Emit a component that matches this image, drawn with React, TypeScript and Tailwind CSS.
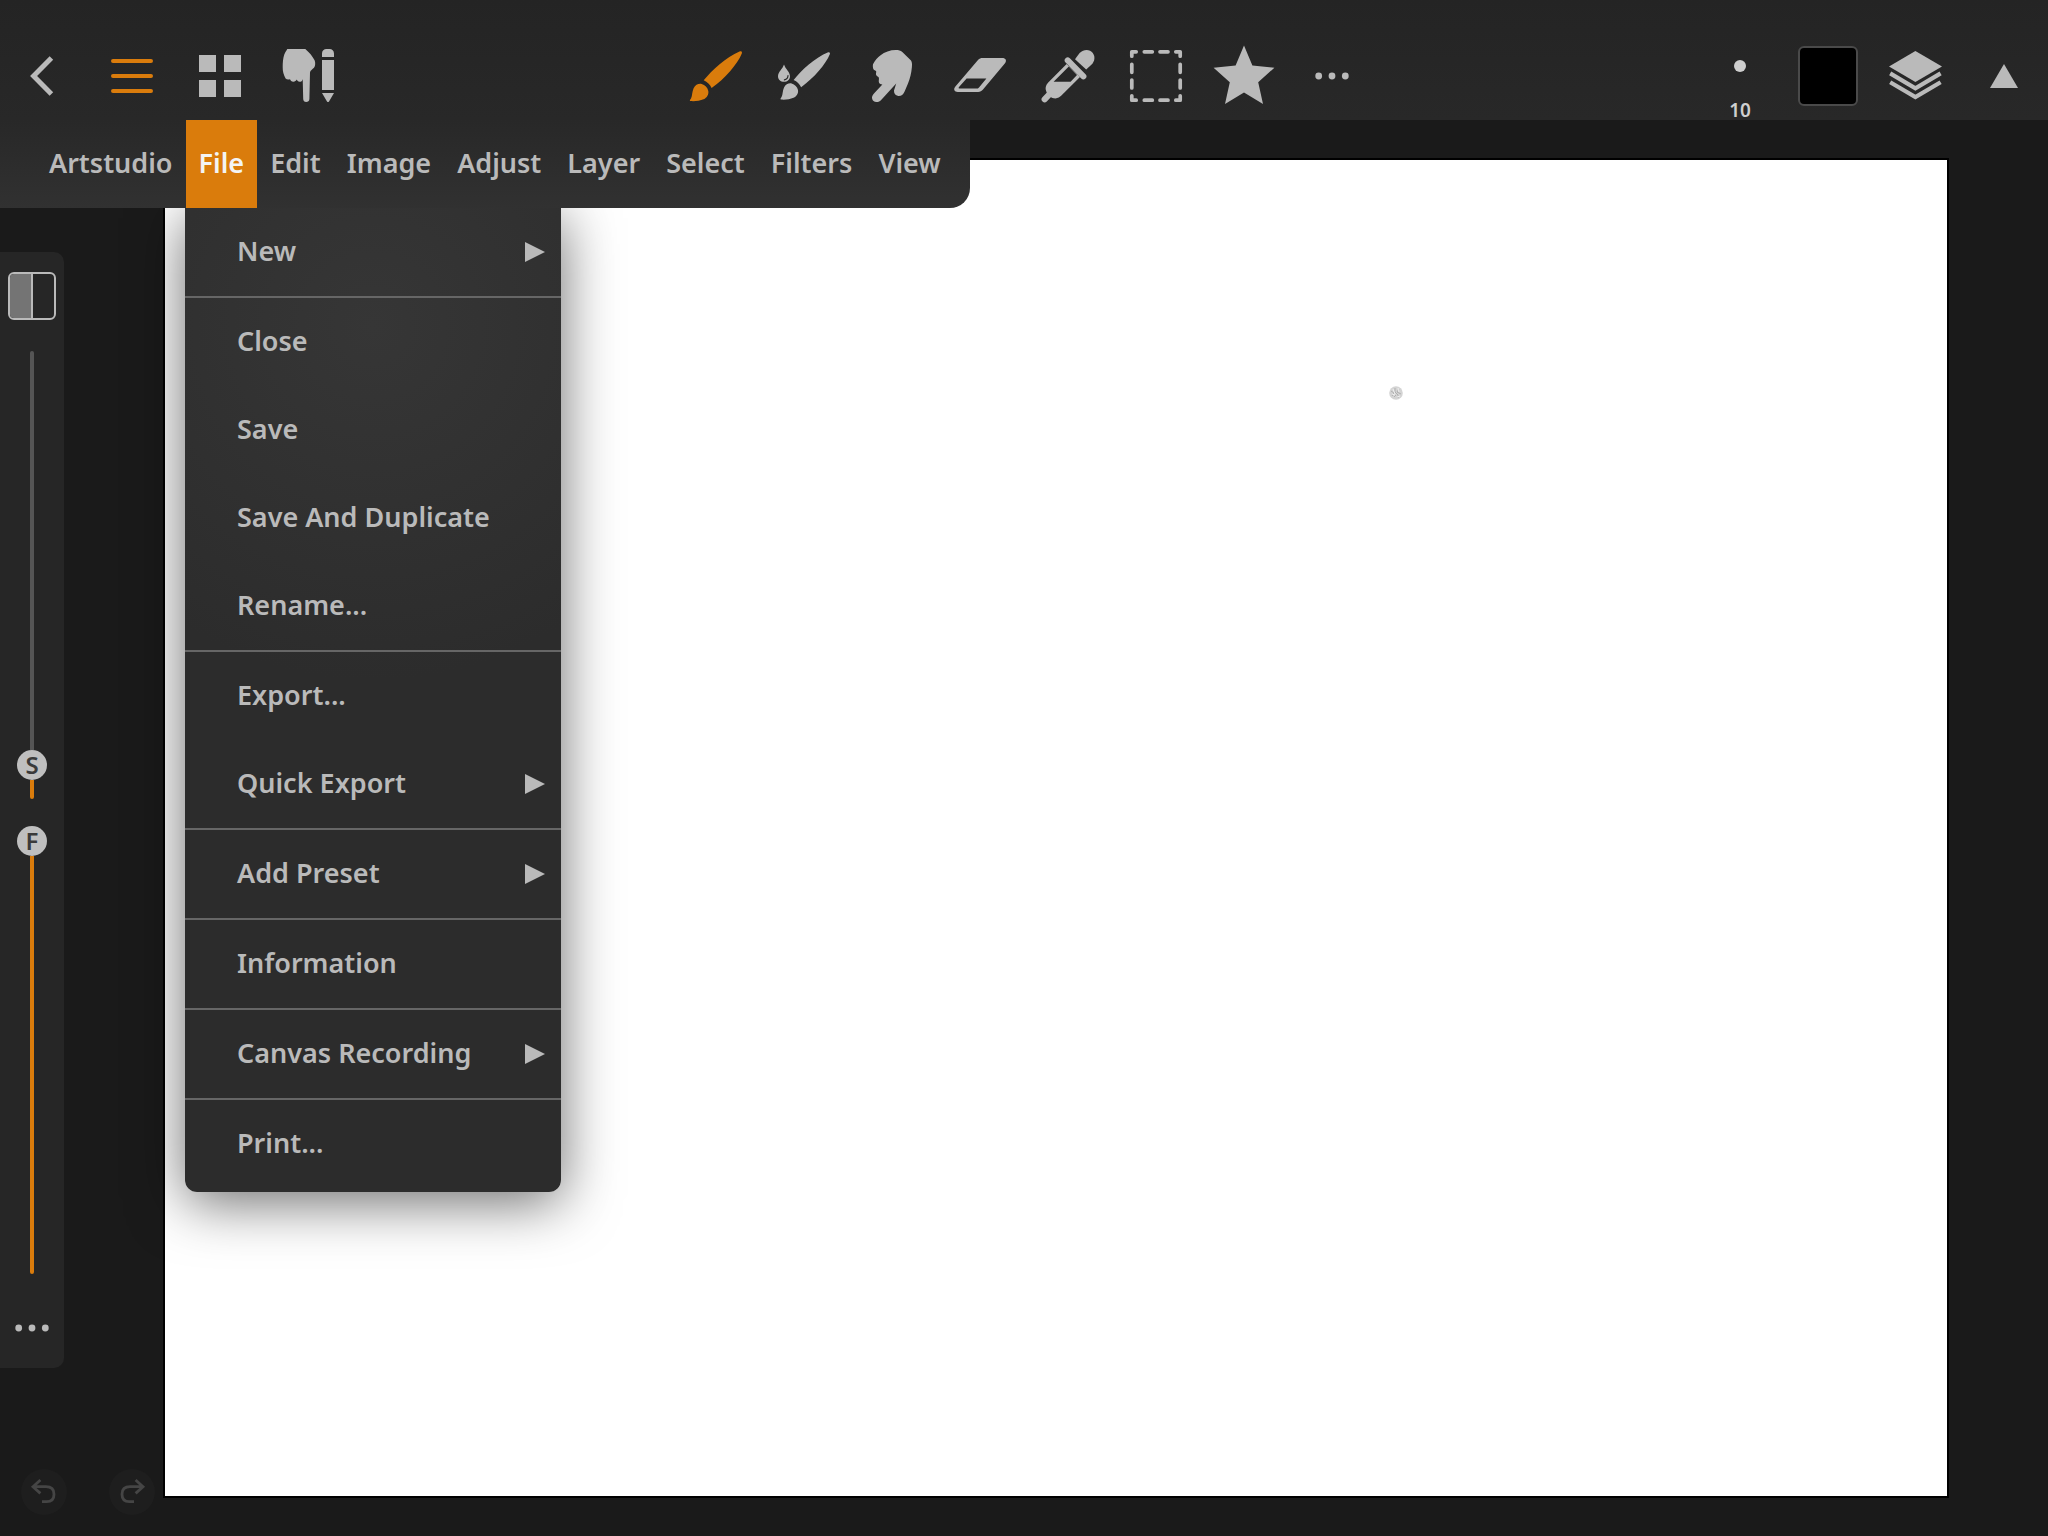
import { useState } from "react";
import type { ReactNode } from "react";

const brush =
  "M19.7 36.3C28 26 42 13 55.5 7.4C57.5 6.7 58.4 7.6 57.8 9.4C53.5 20 41 34.5 27.6 44C26 40.5 23.4 37.9 19.7 36.3ZM6.2 57C5.4 56.6 6.2 55.6 7 54.4C8.4 51.6 8 47.6 9.6 44.2C11.4 40.8 14.6 39.4 17.6 40C21 40.8 23.6 43.6 24.3 46.9C24.9 50.4 23 53.6 19.6 55.2C15.8 56.9 10.4 57.4 6.2 57Z";

const menus = [
  "Artstudio",
  "File",
  "Edit",
  "Image",
  "Adjust",
  "Layer",
  "Select",
  "Filters",
  "View",
];

const fileMenu = [
  [{ label: "New", sub: true }],
  [
    { label: "Close" },
    { label: "Save" },
    { label: "Save And Duplicate" },
    { label: "Rename..." },
  ],
  [{ label: "Export..." }, { label: "Quick Export", sub: true }],
  [{ label: "Add Preset", sub: true }],
  [{ label: "Information" }],
  [{ label: "Canvas Recording", sub: true }],
  [{ label: "Print..." }],
];

function Tool({
  label,
  active,
  children,
}: {
  label: string;
  active?: boolean;
  children: ReactNode;
}) {
  return (
    <button
      type="button"
      aria-label={label}
      className={`flex w-22 items-center justify-center cursor-pointer ${
        active ? "text-[#da7c0c]" : "text-[#bababa]"
      }`}
    >
      <svg viewBox="0 0 64 64" className="size-16" fill="currentColor" aria-hidden="true">
        {children}
      </svg>
    </button>
  );
}

function Dots() {
  return (
    <>
      <circle cx="18.7" cy="32" r="3.4" />
      <circle cx="32" cy="32" r="3.4" />
      <circle cx="45.3" cy="32" r="3.4" />
    </>
  );
}

function Header() {
  return (
    <header className="grid h-30 grid-cols-[1fr_auto_1fr] bg-linear-to-b from-[#242424] to-[#282828] pt-8">
      <div className="flex">
        <Tool label="Back">
          <path
            d="M39.4 14L21.6 32L39.4 50"
            fill="none"
            stroke="currentColor"
            strokeWidth="5"
          />
        </Tool>
        <Tool label="Menu" active>
          <path
            d="M13 17H51M13 32H51M13 47H51"
            stroke="currentColor"
            strokeWidth="4"
            strokeLinecap="round"
          />
        </Tool>
        <Tool label="Panels">
          <path d="M11 11h17v17h-17zM36 11h17v17h-17zM11 36h17v17h-17zM36 36h17v17h-17z" />
        </Tool>
        <Tool label="Touch and pencil">
          <path d="M11.3 5H29.3C33.5 8.6 36.2 12 38.6 16.2C39.6 18.6 39.4 21.8 38 23.8C36.6 25.4 34.2 26.4 34 28.6L33.4 55C33.2 57.2 32 58 30.2 58C28.4 58 27.3 57 27.2 55L26.7 35C26.4 37 25.2 37.8 23.6 37.8C22 37.8 21.2 36.6 20.7 35.6C20 37 18.8 37.8 17.2 37.7C15.6 37.6 14.6 36.4 14 35.2C12.4 35.8 10.6 35.6 9.6 34.4C7.6 31 6.6 27.4 6.7 23.6C6.6 18.6 7.2 13.6 8.2 10.8C9 8.6 10.2 7 11.3 5Z" />
          <path d="M46 13V9.5C46 6.6 48 5 50.4 5H53.6C56 5 58 6.6 58 9.5V13ZM46 16H58V46H46ZM46 49H58L53 57.4Q52 58.6 51 57.4Z" />
        </Tool>
      </div>
      <div className="flex">
        <Tool label="Brush" active>
          <path d={brush} />
        </Tool>
        <Tool label="Wet brush">
          <path d={brush} transform="translate(2.9 1.4) scale(.95)" />
          <path d="M12 20.5C13.4 25 18 28 18 32.2C18 35.4 15.4 37.8 12 37.8C8.6 37.8 6 35.4 6 32.2C6 28 10.6 25 12 20.5Z" />
          <path
            d="M16 31.6C16 34 14.8 35.4 12.4 35.8"
            fill="none"
            stroke="#262626"
            strokeWidth="1.2"
            strokeLinecap="round"
          />
        </Tool>
        <Tool label="Smudge">
          <path d="M36 6C38.6 6 40.6 6.6 42.3 8L51 16.6C52 18 52.2 20.4 51.9 23C51.4 29 50 34.6 48 39.4L44.6 47.6C43.2 51 41 52.2 38.3 52C35.4 51.6 33.8 49.6 34 46.6L36.2 39.4L21.6 55.4C19.8 57.4 18 58.2 16 58C13.4 57.6 11.8 55.8 12 53.2C12.2 51.6 13 50.6 14.2 49.2L22.4 40.6C20.4 40.4 19 39.8 18.8 37.8C18.6 36.4 19.2 35 18.8 33.4C18 32.4 16.4 32.2 16 30.4C15.8 29 16.6 27.8 16 27C15 26.4 13.2 25.8 13.1 24.2C12.8 22.6 12.6 20.8 13.4 19.4C15 16.2 17.6 13.4 20.6 11.2C24.6 8 30 6 36 6Z" />
        </Tool>
        <Tool label="Eraser">
          <path
            fillRule="evenodd"
            d="M34.6 14H54.2C57.8 14 59 16.6 57 19.2L35 45.6C33.6 47.2 32.2 48 30.2 48H9.8C6.4 48 5.2 45.2 7.2 42.8L30 16C31.4 14.6 32.8 14 34.6 14ZM18.6 34.6L10.8 43.2Q10 44.6 11.4 44.6H28.4Q30 44.6 31 43.4L38.4 34.6Z"
          />
        </Tool>
        <Tool label="Eyedropper">
          <path d="M39 15.2L43.6 9C48 4.6 54 5.2 56.8 9C59.4 12.6 58.8 17.2 55.6 20.6L50.2 25.6Z" />
          <path
            d="M31.7 16.4L47.4 32.4M15 48.6L8.6 55.4"
            stroke="currentColor"
            strokeWidth="6"
            strokeLinecap="round"
          />
          <path
            fillRule="evenodd"
            d="M30.6 20L12 38.8C9.6 41.4 9 44.4 10.2 47.2C11.6 51.6 15.4 54.4 19.4 54.4C22 54.4 23.8 53.2 25.4 51.6L44 33ZM32.8 22.6L41 31L34.6 37.8H17.6Z"
          />
        </Tool>
        <Tool label="Marquee select">
          <path
            fill="none"
            stroke="currentColor"
            strokeWidth="3.7"
            strokeLinecap="round"
            strokeLinejoin="round"
            d="M7.8 12.2V7.8H12.2M51.8 7.8H56.2V12.2M56.2 51.8V56.2H51.8M12.2 56.2H7.8V51.8M20.3 7.8H28.3M36 7.8H44M20.3 56.2H28.3M36 56.2H44M7.8 20.3V28.3M7.8 36V44M56.2 20.3V28.3M56.2 36V44"
          />
        </Tool>
        <Tool label="Favourites">
          <path d="M32 1.6L40.4 21.4L62.4 23.7L46.2 38.2L51 60L32 48.5L13 60L17.8 38.2L1.6 23.7L23.6 21.4Z" />
        </Tool>
        <Tool label="More tools">
          <Dots />
        </Tool>
      </div>
      <div className="flex justify-end">
        <button
          type="button"
          aria-label="Brush size"
          className="flex w-22 cursor-pointer flex-col items-center justify-between pt-7 text-[#cfcfcf]"
        >
          <span className="size-3 rounded-full bg-[#cfcfcf]" />
          <span className="text-[19px] leading-5 font-semibold">10</span>
        </button>
        <button
          type="button"
          aria-label="Color"
          className="flex w-22 cursor-pointer items-center justify-center"
        >
          <span className="size-15 rounded-md border-2 border-[#4a4a4a] bg-black" />
        </button>
        <Tool label="Layers">
          <path d="M31.4 7L58 22.4L31.4 38L5 22.4Z" />
          <path
            fill="none"
            stroke="currentColor"
            strokeWidth="4.2"
            d="M6.2 29.4L31.4 44.2L56.6 29.4M6.2 38.2L31.4 53L56.6 38.2"
          />
        </Tool>
        <Tool label="Collapse">
          <path d="M32 20L46 44H18Z" />
        </Tool>
      </div>
    </header>
  );
}

function MenuBar() {
  const [open, setOpen] = useState("File");

  return (
    <nav className="absolute top-0 left-0 z-10" aria-label="Main menu">
      <div className="relative z-10 flex h-22 rounded-br-[20px] bg-linear-to-b from-[#282828] to-[#313131] pr-4 pl-9">
        {menus.map((name) => (
          <button
            key={name}
            type="button"
            onClick={() => setOpen(name)}
            className={`cursor-pointer px-[13px] pb-0.5 text-[27px] font-semibold ${
              open === name ? "bg-[#da7c0c] text-[#f4f4f4]" : ""
            }`}
          >
            {name}
          </button>
        ))}
      </div>
      {open === "File" && (
        <ul className="absolute top-22 left-[185px] w-94 divide-y-2 divide-[#666666] rounded-b-xl bg-[radial-gradient(circle_at_50%_12%,#363636,#2c2c2c_40%)] pb-1 shadow-[0_10px_56px_rgba(0,0,0,0.58)]">
          {fileMenu.map((group) => (
            <li key={group[0].label}>
              {group.map((item) => (
                <button
                  key={item.label}
                  type="button"
                  className="flex h-22 w-full cursor-pointer items-center justify-between pr-4 pl-13 text-[27px] font-semibold"
                >
                  <span className="pb-0.5">{item.label}</span>
                  {"sub" in item && (
                    <svg viewBox="0 0 20 20" className="size-5" aria-hidden="true">
                      <path d="M0 0L20 10L0 20Z" fill="currentColor" />
                    </svg>
                  )}
                </button>
              ))}
            </li>
          ))}
        </ul>
      )}
    </nav>
  );
}

function Slider({
  label,
  letter,
  start,
}: {
  label: string;
  letter: string;
  start: number;
}) {
  const [value, setValue] = useState(start);

  return (
    <label className="relative flex h-112 w-full flex-col items-center">
      <span
        className="w-1 rounded-t-full bg-[#555555]"
        style={{ flexGrow: 100 - value }}
      />
      <span className="flex size-[30px] shrink-0 items-center justify-center rounded-full bg-[#bfbfbf] text-2xl font-semibold text-[#3a3a3a]">
        {letter}
      </span>
      <span
        className="w-1 rounded-b-full bg-[#da7c0c]"
        style={{ flexGrow: value }}
      />
      <input
        type="range"
        aria-label={label}
        min={0}
        max={100}
        step={0.5}
        value={value}
        onChange={(e) => setValue(Number(e.target.value))}
        className="absolute inset-0 h-full w-full cursor-pointer opacity-0 [direction:rtl] [writing-mode:vertical-lr]"
      />
    </label>
  );
}

function SidePanel() {
  return (
    <div className="mt-33 flex w-16 flex-col items-center rounded-r-[10px] bg-[#262626] pt-5">
      <button
        type="button"
        aria-label="Toggle side"
        className="flex size-12 cursor-pointer overflow-hidden rounded-md border-2 border-[#bababa]"
      >
        <span className="h-full w-[23px] border-r-2 border-[#bababa] bg-[#747474]" />
      </button>
      <div className="mt-[31px] flex w-full flex-col gap-[27px]">
        <Slider label="Size" letter="S" start={4.5} />
        <Slider label="Flow" letter="F" start={100} />
      </div>
      <button type="button" aria-label="More options" className="mt-[22px] mb-2 cursor-pointer">
        <svg viewBox="0 0 64 64" className="size-16" fill="currentColor" aria-hidden="true">
          <Dots />
        </svg>
      </button>
    </div>
  );
}

function HistoryButton({ label, flip }: { label: string; flip?: boolean }) {
  return (
    <button
      type="button"
      aria-label={label}
      className={`size-[46px] cursor-pointer rounded-full bg-[#1e1e1e] text-[#454545] ${
        flip ? "-scale-x-100" : ""
      }`}
    >
      <svg viewBox="0 0 46 46" fill="none" stroke="currentColor" strokeWidth="2.8" aria-hidden="true">
        <path d="M12 17.7H25C30.4 17.7 33 20.6 33 25.2C33 29.8 30.4 32.7 25.6 32.7H21M19.4 11L12 17.7L19.4 24.4" />
      </svg>
    </button>
  );
}

export default function App() {
  return (
    <div className="flex min-h-screen flex-col bg-[#1a1a1a] font-['Noto_Sans',sans-serif] text-[#bababa]">
      <Header />
      <main className="relative flex flex-1">
        <MenuBar />
        <aside className="flex w-[163px] shrink-0 flex-col justify-between">
          <SidePanel />
          <div className="flex gap-[42px] pb-[21px] pl-[21px]">
            <HistoryButton label="Undo" />
            <HistoryButton label="Redo" flip />
          </div>
        </aside>
        <section
          aria-label="Canvas"
          className="relative my-[38px] mr-[99px] flex-1 border-2 border-black bg-white"
        >
          {/* brush cursor */}
          <svg
            viewBox="0 0 14 14"
            className="absolute top-[226px] left-[1224px] size-3.5"
            aria-hidden="true"
          >
            <circle cx="7" cy="7" r="6.8" fill="#d4d4d4" />
            <path
              d="M2 5L5 7L3 10M6 2V6L9 9V12M10 3L8 6L12 8M5 11L7 9"
              fill="none"
              stroke="#b0b0b0"
            />
            <path d="M4 3L6 8M9 2L10 6M11 10L8 11M3 8L6 9" stroke="#f0f0f0" />
          </svg>
        </section>
      </main>
    </div>
  );
}
